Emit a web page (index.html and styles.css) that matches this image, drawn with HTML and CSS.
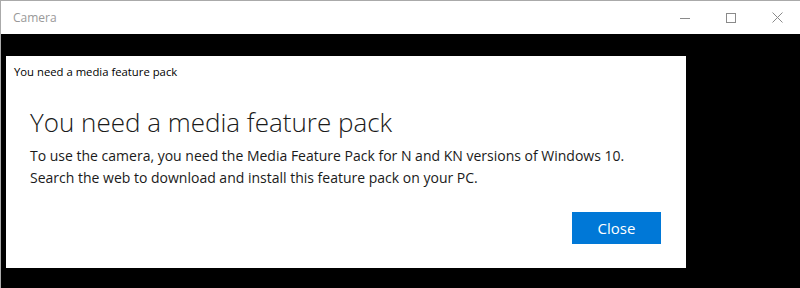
FILE: index.html
```html
<!DOCTYPE html>
<html lang="en">
<head>
  <meta charset="UTF-8" />
  <title>Camera</title>
  <link rel="stylesheet" href="styles.css">
</head>
<body>
  <div class="window">
    <div class="titlebar">
      <span class="app-name">Camera</span>
      <div class="controls">
        <span class="ctl">
          <svg width="10" height="10" viewBox="0 0 10 10"><path d="M0 5.5h10" stroke="#8a8a8a" stroke-width="1"/></svg>
        </span>
        <span class="ctl">
          <svg width="10" height="10" viewBox="0 0 10 10"><rect x="0.5" y="0.5" width="9" height="9" fill="none" stroke="#8a8a8a" stroke-width="1"/></svg>
        </span>
        <span class="ctl">
          <svg width="11" height="11" viewBox="0 0 11 11"><path d="M0.5 0.5l10 10M10.5 0.5l-10 10" stroke="#8a8a8a" stroke-width="1"/></svg>
        </span>
      </div>
    </div>
    <div class="stage">
      <div class="dialog">
        <div class="dialog-caption">You need a media feature pack</div>
        <div class="dialog-body">
          <h1>You need a media feature pack</h1>
          <p>To use the camera, you need the Media Feature Pack for N and KN versions of Windows 10.<br>
          Search the web to download and install this feature pack on your PC.</p>
          <div class="actions">
            <button class="btn-primary">Close</button>
          </div>
        </div>
      </div>
    </div>
  </div>
</body>
</html>
```

FILE: styles.css
```css
body {
  margin: 0;
  font-family: "Open Sans", "Noto Sans", sans-serif;
  background: #000;
}

.window {
  width: 800px;
  height: 288px;
  box-sizing: border-box;
  border-top: 1px solid #aaa;
  border-left: 1px solid #aaa;
  display: flex;
  flex-direction: column;
}

.titlebar {
  height: 33px;
  background: #fff;
  display: flex;
  align-items: center;
  justify-content: space-between;
}

.app-name {
  padding-left: 12px;
  font-size: 12px;
  color: #999;
}

.controls {
  display: flex;
  height: 100%;
}

.ctl {
  width: 46px;
  display: flex;
  align-items: center;
  justify-content: center;
}

.stage {
  flex: 1;
  background: #000;
  padding: 22px 0 0 5px;
}

.dialog {
  width: 680px;
  height: 212px;
  background: #fff;
  box-sizing: border-box;
}

.dialog-caption {
  padding: 8px 0 0 8px;
  font-size: 11.3px;
  color: #000;
}

.dialog-body {
  padding: 0 24px;
}

h1 {
  margin: 25px 0 0;
  font-size: 26px;
  line-height: 36px;
  font-weight: 300;
  color: #1a1a1a;
}

p {
  margin: 5px 0 0;
  font-size: 14px;
  line-height: 22px;
  color: #1a1a1a;
}

.actions {
  display: flex;
  justify-content: flex-end;
  margin-top: 23px;
  padding-right: 1px;
}

.btn-primary {
  width: 89px;
  height: 32px;
  border: none;
  background: #0078d7;
  color: #fff;
  font-family: inherit;
  font-size: 15px;
}
```
